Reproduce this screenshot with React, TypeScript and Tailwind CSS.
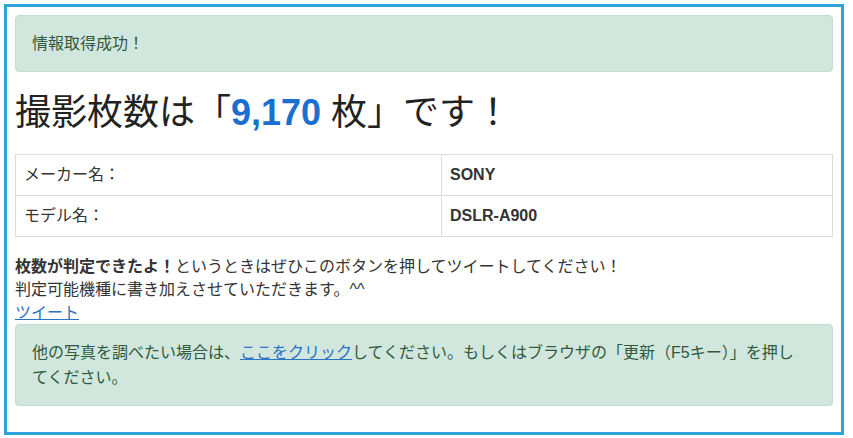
import React from "react";

const FONT = "font-['Liberation_Sans','Noto_Sans_CJK_JP',sans-serif]";

function Alert({ children }: { children: React.ReactNode }) {
  return (
    <div className="rounded-[4px] border border-[#c3ddd1] bg-[#d1e6dd] px-[16px] py-[15px] text-[16px] leading-[25px] text-[#2f5a3c]">
      {children}
    </div>
  );
}

export default function App() {
  return (
    <div className={`${FONT} bg-white text-[#333] w-[853px] h-[438px] pt-[4px] pl-[4px]`}>
      <div className="w-[840px] h-[431px] border-[3px] border-[#2ea2da] p-[8px]">
        {/* result alert */}
        <Alert>情報取得成功！</Alert>

        {/* headline */}
        <h1 className="mt-[21px] mb-[21px] text-[36px] leading-[40px] font-normal text-[#222]">
          撮影枚数は「<span className="font-bold text-[#1a6fd0]">9,170</span> 枚」です！
        </h1>

        {/* camera info */}
        <table className="w-full border-collapse text-[16px] leading-[24px]">
          <tbody>
            <tr>
              <td className="w-[426px] border border-[#ddd] px-[8px] py-[8px]">メーカー名：</td>
              <td className="border border-[#ddd] px-[8px] py-[8px] font-bold">SONY</td>
            </tr>
            <tr>
              <td className="border border-[#ddd] px-[8px] py-[8px]">モデル名：</td>
              <td className="border border-[#ddd] px-[8px] py-[8px] font-bold">DSLR-A900</td>
            </tr>
          </tbody>
        </table>

        <p className="mt-[19px] text-[16px] leading-[22.8px]">
          <b>枚数が判定できたよ！</b>というときはぜひこのボタンを押してツイートしてください！
          <br />
          判定可能機種に書き加えさせていただきます。^^
          <br />
          <a href="#" className="text-[#2a72c4] underline">ツイート</a>
        </p>

        <Alert>
          他の写真を調べたい場合は、
          <a href="#" className="text-[#2a72c4] underline">ここをクリック</a>
          してください。もしくはブラウザの「更新（F5キー）」を押し
          <br />
          てください。
        </Alert>
      </div>
    </div>
  );
}
